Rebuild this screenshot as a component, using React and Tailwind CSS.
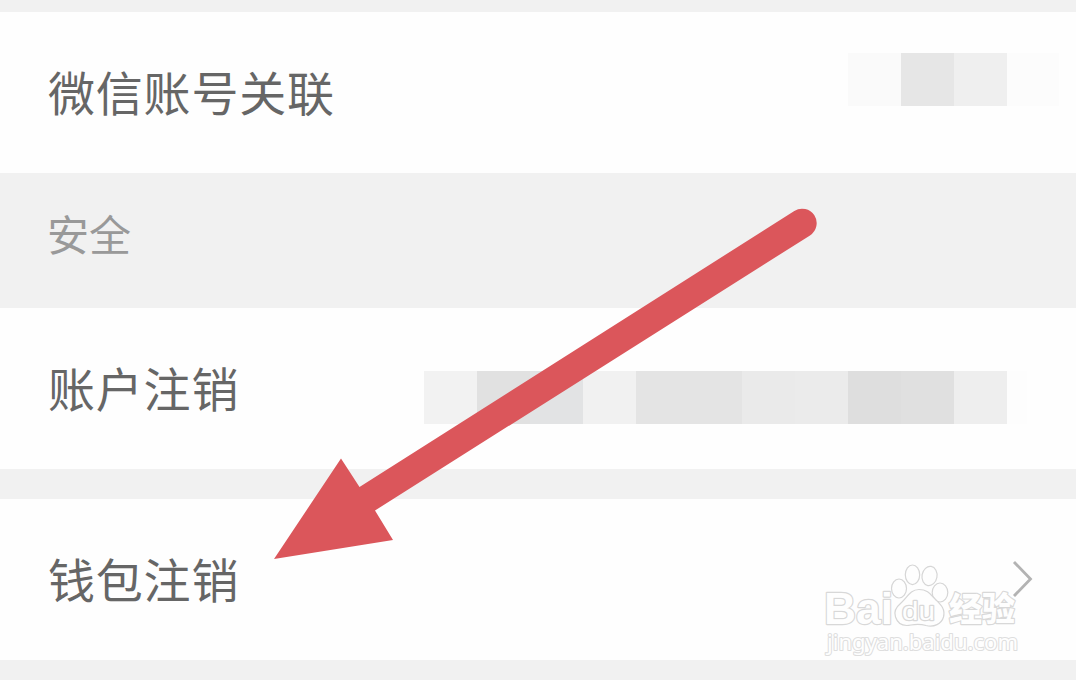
const cjk = "font-['Noto_Sans_CJK_SC',sans-serif]"

const linkedAccount = [
  'w-[53px] bg-[#fafafa]',
  'w-[53px] bg-[#e6e6e6]',
  'w-[53px] bg-[#efefef]',
  'w-[52px] bg-[#fcfcfc]'
]

const accountHint = [
  'w-[53px] bg-[#f2f2f2]',
  'w-[53px] bg-[#e1e1e1]',
  'w-[53px] bg-[#e2e3e4]',
  'w-[53px] bg-[#f1f1f1]',
  'w-[106px] bg-[#e4e4e4]',
  'w-[53px] bg-[#eaeaea]',
  'w-[53px] bg-[#ebebeb]',
  'w-[53px] bg-[#dedede]',
  'w-[53px] bg-[#e0e0e0]',
  'w-[53px] bg-[#eeeeee]',
  'w-[20px] bg-[#fdfdfd]'
]

function Mosaic({ blocks }) {
  return (
    <div className="flex h-[53px]">
      {blocks.map((block, i) => (
        <div key={i} className={block} />
      ))}
    </div>
  )
}

function Row({ label, children }) {
  return (
    <div className="flex h-[161px] items-center justify-between bg-[#fefefe] pl-12">
      <span className="pb-[5px] text-[47px] leading-none tracking-[0.8px] text-[#666666]">
        {label}
      </span>
      {children}
    </div>
  )
}

function Arrow() {
  return (
    <svg className="pointer-events-none absolute inset-0" width="1076" height="680" viewBox="0 0 1076 680">
      <path
        d="M274 559 L341 458.500 L359.500 487 L794.300 211 A14.500 14.500 0 0 1 810 235.400 L375 510.500 L393 540 Z"
        fill="#db565b"
      />
    </svg>
  )
}

function Watermark() {
  return (
    <svg className="pointer-events-none absolute bottom-0 right-0" width="266" height="130" viewBox="810 550 266 130">
      <g fill="#fefefe" stroke="#d6d6d6" strokeWidth="1.200">
        <ellipse cx="899" cy="588.500" rx="7.500" ry="9.500" />
        <ellipse cx="912.500" cy="574.800" rx="7.200" ry="9.800" />
        <ellipse cx="929.500" cy="576" rx="7.500" ry="9.700" transform="rotate(10 929.500 576)" />
        <ellipse cx="940" cy="592.500" rx="7.800" ry="9.500" />
        <path d="M919 589.500 C910 589.500 907 598 901 603 C895 608 894 613 895.500 617 C898 624.500 904 626.500 911 625 C917 623.800 921 624 926 625.500 C934 627.500 941.500 624 943.500 617 C945.500 609 941 605 936 600 C931 595 928 589.500 919 589.500 Z" />
      </g>
      <g
        className="font-['Liberation_Sans',sans-serif]"
        fill="#fefefe"
        stroke="#d8d8d8"
        strokeWidth="2.300"
        strokeLinejoin="round"
        paintOrder="stroke"
      >
        <text className="font-bold" x="824" y="624" fontSize="43.500" textLength="69" lengthAdjust="spacingAndGlyphs">Bai</text>
        <text
          x="902" y="619.500" fontSize="26" textLength="33" lengthAdjust="spacingAndGlyphs"
        >
          du
        </text>
        <text
          className="font-['Noto_Sans_CJK_SC',sans-serif] font-black"
          x="949" y="621" fontSize="33.500" textLength="66" lengthAdjust="spacingAndGlyphs"
        >
          经验
        </text>
      </g>
      <text
        className="font-['Noto_Sans',sans-serif]"
        x="827" y="650" fontSize="22" textLength="191" lengthAdjust="spacingAndGlyphs"
        fill="#fefefe" stroke="#dedede" strokeWidth="2.200" strokeLinejoin="round" paintOrder="stroke"
      >
        jingyan.baidu.com
      </text>
    </svg>
  )
}

function App() {
  return (
    <div className={`relative h-[680px] w-[1076px] overflow-hidden bg-[#f1f1f1] pt-3 ${cjk}`}>
      <Row label="微信账号关联">
        <div className="mb-[26px] mr-[17px]">
          <Mosaic blocks={linkedAccount} />
        </div>
      </Row>
      <div className="flex h-[135px] items-center pb-[15px] pl-[47px] text-[42px] leading-none text-[#999999]">
        安全
      </div>
      <Row label="账户注销">
        <div className="mr-[49px] mt-[18px]">
          <Mosaic blocks={accountHint} />
        </div>
      </Row>
      <div className="h-[30px]" />
      <Row label="钱包注销">
        <svg className="mr-[42px]" width="22" height="40" viewBox="0 0 22 40" fill="none" stroke="#b3b3b3" strokeWidth="2.800">
          <path d="M2 2 L18.500 19 L2 36" />
        </svg>
      </Row>
      <Watermark />
      <Arrow />
    </div>
  )
}

export default App
